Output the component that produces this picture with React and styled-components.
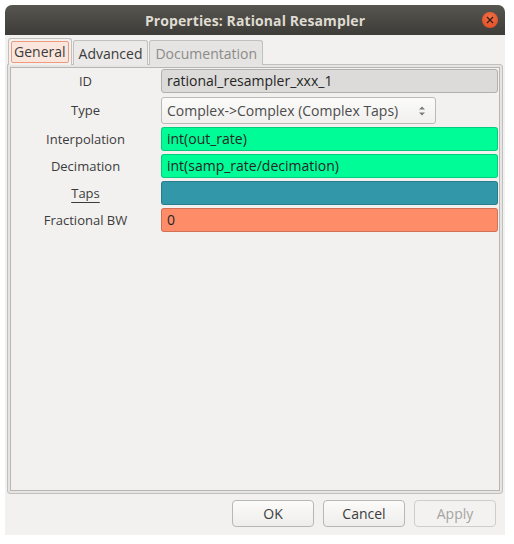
import React from "react";
import styled, { createGlobalStyle } from "styled-components";

const Global = createGlobalStyle`
  html, body {
    margin: 0;
    padding: 0;
    background: #ffffff;
  }
  body {
    font-family: "Open Sans", "DejaVu Sans", sans-serif;
    font-size: 13px;
    color: #3c3c3c;
  }
`;

const fields = [
  { label: "Interpolation", value: "int(out_rate)", color: "#00fc96" },
  { label: "Decimation", value: "int(samp_rate/decimation)", color: "#00fc96" },
  { label: "Taps", value: "", color: "#3298a9", underline: true },
  { label: "Fractional BW", value: "0", color: "#ff8c69" },
];

function App() {
  return (
    <Page>
      <Global />
      <Window>
        <TitleBar>
          <Title>Properties: Rational Resampler</Title>
          <CloseButton>
            <svg width="8" height="8" viewBox="0 0 8 8">
              <path d="M1 1 L7 7 M7 1 L1 7" stroke="#3a1d12" strokeWidth="1.4" />
            </svg>
          </CloseButton>
        </TitleBar>
        <Body>
          <TabRow>
            <Tab active>
              <TabLabel focused>General</TabLabel>
            </Tab>
            <Tab>
              <TabLabel>Advanced</TabLabel>
            </Tab>
            <Tab disabled>
              <TabLabel>Documentation</TabLabel>
            </Tab>
          </TabRow>
          <Frame>
            <Grid>
              <Label>ID</Label>
              <Entry readOnly>rational_resampler_xxx_1</Entry>
              <Label>Type</Label>
              <Combo>
                <span>Complex-&gt;Complex (Complex Taps)</span>
                <svg width="8" height="12" viewBox="0 0 8 12">
                  <path d="M1 4.5 L4 1.5 L7 4.5 Z" fill="#7a7a7a" />
                  <path d="M1 7.5 L4 10.5 L7 7.5 Z" fill="#7a7a7a" />
                </svg>
              </Combo>
              {fields.map((f) => (
                <React.Fragment key={f.label}>
                  <Label underline={f.underline}>{f.label}</Label>
                  <Entry bg={f.color}>{f.value}</Entry>
                </React.Fragment>
              ))}
            </Grid>
          </Frame>
          <ButtonRow>
            <Button>OK</Button>
            <Button>Cancel</Button>
            <Button disabled>Apply</Button>
          </ButtonRow>
        </Body>
      </Window>
    </Page>
  );
}

const Page = styled.div`
  padding: 5px;
  width: 500px;
`;

const Window = styled.div`
  width: 500px;
  height: 530px;
  display: flex;
  flex-direction: column;
  background: #f2f1f0;
  border-radius: 7px 7px 0 0;
  overflow: hidden;
`;

const TitleBar = styled.div`
  height: 30px;
  flex: none;
  display: flex;
  align-items: center;
  justify-content: center;
  position: relative;
  background: linear-gradient(180deg, #57554f 0%, #3d3c38 100%);
`;

const Title = styled.div`
  font-weight: bold;
  font-size: 14px;
  color: #dfdbd2;
  letter-spacing: 0.1px;
`;

const CloseButton = styled.div`
  position: absolute;
  right: 7px;
  top: 7px;
  width: 16px;
  height: 16px;
  border-radius: 50%;
  background: radial-gradient(circle at 50% 35%, #f0714a 0%, #e5542a 70%, #c9431e 100%);
  display: flex;
  align-items: center;
  justify-content: center;
`;

const Body = styled.div`
  flex: 1;
  display: flex;
  flex-direction: column;
  padding: 3px 2px 8px 2px;
`;

const TabRow = styled.div`
  display: flex;
  gap: 1px;
  padding-left: 1px;
  height: 27px;
  position: relative;
  z-index: 1;
`;

const Tab = styled.div`
  height: ${(p) => (p.active ? "27px" : "25px")};
  margin-top: ${(p) => (p.active ? "0" : "2px")};
  border: 1px solid #c2c0bc;
  border-bottom: none;
  border-radius: 3px 3px 0 0;
  background: ${(p) => (p.active ? "#f2f1f0" : p.disabled ? "#e5e4e2" : "#ebeae8")};
  color: ${(p) => (p.disabled ? "#8b8b88" : "#3c3c3c")};
  padding: 2px 2px 0 2px;
  box-sizing: border-box;
  display: flex;
  align-items: flex-start;
`;

const TabLabel = styled.div`
  font-size: 14px;
  line-height: 20px;
  padding: 0 2px;
  border: 1px solid ${(p) => (p.focused ? "#ef9a7c" : "transparent")};
  background: ${(p) => (p.focused ? "#fbe6de" : "transparent")};
  border-radius: 2px;
`;

const Frame = styled.div`
  flex: 1;
  margin-top: -1px;
  border: 1px solid #c2c0bc;
  box-shadow: inset 0 0 0 2px #e6e5e3, inset 0 0 0 3px #b8b6b2;
  padding: 4px 6px 0 2px;
  border-radius: 0 3px 3px 3px;
`;

const Grid = styled.div`
  display: grid;
  grid-template-columns: 151px 337px;
  grid-template-rows: 24px 28px repeat(4, 24px);
  row-gap: 3px;
  align-items: center;
`;

const Label = styled.div`
  text-align: center;
  color: #3c3c3c;
  text-decoration: ${(p) => (p.underline ? "underline" : "none")};
  text-underline-offset: 4px;
`;

const Entry = styled.div`
  height: 24px;
  box-sizing: border-box;
  border: 1px solid ${(p) => (p.readOnly ? "#b2b0ac" : "rgba(0,0,0,0.18)")};
  border-radius: 3px;
  background: ${(p) => (p.readOnly ? "#dcdbd9" : p.bg)};
  color: #262626;
  font-size: 14px;
  line-height: 22px;
  padding: 0 5px;
  white-space: nowrap;
  overflow: hidden;
`;

const Combo = styled.div`
  align-self: end;
  width: 275px;
  height: 27px;
  box-sizing: border-box;
  border: 1px solid #bcbab6;
  border-radius: 3px;
  background: linear-gradient(180deg, #fbfbfa, #f1f0ef);
  display: flex;
  align-items: center;
  justify-content: space-between;
  padding: 0 9px 0 5px;
  color: #4c4c4c;
  font-size: 14px;
`;

const ButtonRow = styled.div`
  display: flex;
  justify-content: flex-end;
  gap: 9px;
  padding: 6px 7px 0 0;
`;

const Button = styled.div`
  width: 82px;
  height: 27px;
  box-sizing: border-box;
  border: 1px solid ${(p) => (p.disabled ? "#d0cecb" : "#b9b7b3")};
  border-radius: 4px;
  background: ${(p) =>
    p.disabled ? "#f3f2f1" : "linear-gradient(180deg, #fbfbfa, #eeedeb)"};
  color: ${(p) => (p.disabled ? "#a5a4a1" : "#3c3c3c")};
  display: flex;
  align-items: center;
  justify-content: center;
  font-size: 14px;
`;

export default App;
